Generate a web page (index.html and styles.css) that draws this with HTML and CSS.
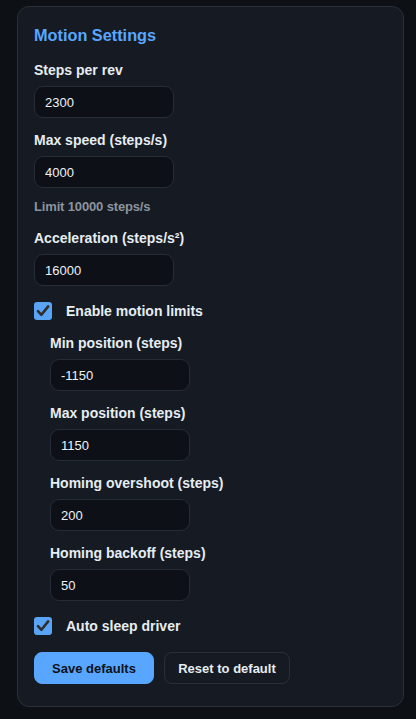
FILE: index.html
```html
<!DOCTYPE html>
<html lang="en">
<head>
<meta charset="utf-8">
<title>Motion Settings</title>
<link rel="stylesheet" href="styles.css">
</head>
<body>
<section class="card">
  <h2 class="title">Motion Settings</h2>

  <div class="field">
    <label class="label">Steps per rev</label>
    <input class="input" type="text" value="2300">
  </div>

  <div class="field">
    <label class="label">Max speed (steps/s)</label>
    <input class="input" type="text" value="4000">
    <div class="hint">Limit 10000 steps/s</div>
  </div>

  <div class="field">
    <label class="label">Acceleration (steps/s²)</label>
    <input class="input" type="text" value="16000">
  </div>

  <div class="check-row">
    <span class="check"><svg viewBox="0 0 18 18" width="18" height="18"><path d="M4 9.2 L7.4 12.8 L14.2 4.4" fill="none" stroke="#2e2e2e" stroke-width="2.6" stroke-linecap="round" stroke-linejoin="round"/></svg></span>
    <span class="check-label">Enable motion limits</span>
  </div>

  <div class="nested">
    <div class="field">
      <label class="label">Min position (steps)</label>
      <input class="input" type="text" value="-1150">
    </div>
    <div class="field">
      <label class="label">Max position (steps)</label>
      <input class="input" type="text" value="1150">
    </div>
    <div class="field">
      <label class="label">Homing overshoot (steps)</label>
      <input class="input" type="text" value="200">
    </div>
    <div class="field">
      <label class="label">Homing backoff (steps)</label>
      <input class="input" type="text" value="50">
    </div>
  </div>

  <div class="check-row">
    <span class="check"><svg viewBox="0 0 18 18" width="18" height="18"><path d="M4 9.2 L7.4 12.8 L14.2 4.4" fill="none" stroke="#2e2e2e" stroke-width="2.6" stroke-linecap="round" stroke-linejoin="round"/></svg></span>
    <span class="check-label">Auto sleep driver</span>
  </div>

  <div class="actions">
    <button class="btn btn-primary">Save defaults</button>
    <button class="btn btn-secondary">Reset to default</button>
  </div>
</section>
</body>
</html>
```

FILE: styles.css
```css
* { box-sizing: border-box; }

html, body {
  margin: 0;
  background: #0d1116;
}

body {
  padding: 6px 12px 0 17px;
  font-family: "Liberation Sans", Arial, sans-serif;
  color: #e6edf3;
}

.card {
  background: #161a22;
  border: 1px solid #2a3039;
  border-radius: 12px;
  padding: 16px 16px 22px 16px;
  display: flex;
  flex-direction: column;
}

.title {
  margin: 0 0 13px 0;
  font-size: 16.3px;
  line-height: 24px;
  font-weight: 700;
  color: #58a6ff;
}

.field {
  display: flex;
  flex-direction: column;
  align-items: flex-start;
}

.field + .field { margin-top: 12px; }

.label {
  font-size: 14px;
  line-height: 20px;
  font-weight: 700;
  color: #e6edf3;
  margin-bottom: 6px;
}

.input {
  width: 140px;
  height: 32px;
  padding: 0 10px;
  background: #0d1117;
  border: 1px solid #262c36;
  border-radius: 9px;
  color: #eef2f6;
  font-family: "Liberation Sans", Arial, sans-serif;
  font-size: 13px;
  outline: none;
}

.hint {
  margin-top: 10px;
  font-size: 13px;
  line-height: 18px;
  font-weight: 700;
  letter-spacing: -0.15px;
  color: #8b949e;
}

.check-row {
  display: flex;
  align-items: center;
  height: 20px;
  margin-top: 15px;
}

.check {
  width: 18px;
  height: 18px;
  border-radius: 3px;
  background: #5aa4f6;
  display: flex;
}

.check svg { display: block; }

.check-label {
  margin-left: 14px;
  font-size: 14px;
  font-weight: 700;
  line-height: 20px;
  color: #e6edf3;
}

.nested {
  margin-top: 12px;
  padding-left: 16px;
  display: flex;
  flex-direction: column;
}

.actions {
  margin-top: 16px;
  display: flex;
  gap: 10px;
}

.btn {
  height: 32px;
  border-radius: 8px;
  font-family: "Liberation Sans", Arial, sans-serif;
  font-size: 13px;
  font-weight: 700;
  cursor: pointer;
}

.btn-primary {
  width: 120px;
  background: #58a6ff;
  border: 1px solid #58a6ff;
  color: #0d1117;
}

.btn-secondary {
  width: 126px;
  background: transparent;
  border: 1px solid #2a3039;
  color: #e6edf3;
}
```
